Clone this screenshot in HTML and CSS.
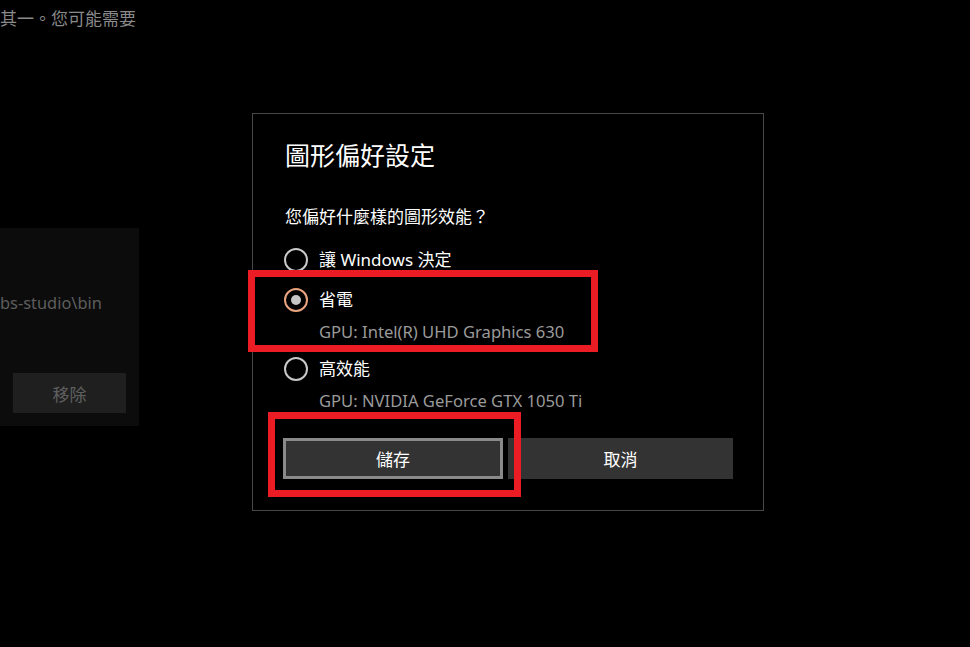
FILE: index.html
```html
<!DOCTYPE html>
<html lang="zh-Hant">
<head>
<meta charset="utf-8">
<title>圖形偏好設定</title>
<link rel="stylesheet" href="styles.css">
</head>
<body>
<div class="page">
  <p class="bg-text">其一。您可能需要</p>
  <div class="app-panel">
    <p class="app-path">bs-studio\bin</p>
    <button class="remove-btn" type="button">移除</button>
  </div>
</div>

<div class="dialog">
  <h1 class="dialog-title">圖形偏好設定</h1>
  <p class="question">您偏好什麼樣的圖形效能？</p>
  <div class="options">
    <div class="option opt-first">
      <div class="opt-row"><span class="radio"></span><span class="opt-label">讓 Windows 決定</span></div>
    </div>
    <div class="option opt-second">
      <div class="opt-row"><span class="radio radio-on"><span class="dot"></span></span><span class="opt-label">省電</span></div>
      <div class="gpu">GPU: Intel(R) UHD Graphics 630</div>
    </div>
    <div class="option opt-third">
      <div class="opt-row"><span class="radio"></span><span class="opt-label">高效能</span></div>
      <div class="gpu">GPU: NVIDIA GeForce GTX 1050 Ti</div>
    </div>
  </div>
  <div class="actions">
    <button class="btn btn-focus" type="button">儲存</button>
    <button class="btn" type="button">取消</button>
  </div>
</div>

<div class="mark mark-power"></div>
<div class="mark mark-save"></div>
</body>
</html>
```

FILE: styles.css
```css
* { box-sizing: border-box; }
html, body {
  margin: 0;
  padding: 0;
  background: #000;
  width: 970px;
  height: 647px;
  overflow: hidden;
  font-family: "Noto Sans", "Noto Sans CJK TC", sans-serif;
  font-size: 17px;
  color: #fff;
}
.page { position: relative; }
.bg-text {
  margin: 7px 0 0 0;
  line-height: 24px;
  color: #8a8a8a;
  white-space: nowrap;
}
.app-panel {
  margin-top: 197px;
  width: 139px;
  height: 198px;
  background: #0c0c0c;
  overflow: hidden;
  display: flex;
  flex-direction: column;
  align-items: flex-start;
}
.app-path {
  margin: 63px 0 0 0;
  line-height: 24px;
  font-size: 16.4px;
  color: #5e5e5e;
  white-space: nowrap;
}
.remove-btn {
  margin: 58px 0 0 13px;
  width: 113px;
  height: 40px;
  border: 0;
  background: #1f1f1f;
  color: #5e5e5e;
  font-family: inherit;
  font-size: 17px;
  padding: 0;
}

.dialog {
  position: absolute;
  left: 252px;
  top: 113px;
  width: 512px;
  height: 398px;
  border: 1px solid #474747;
  background: #000;
  padding: 25px 30px 0 32px;
}
.dialog-title {
  margin: 0;
  font-size: 25px;
  font-weight: 400;
  line-height: 32px;
}
.question {
  margin: 34px 0 0 0;
  line-height: 24px;
}
.options { margin-top: 19px; }
.opt-second { margin-top: 16px; }
.opt-third { margin-top: 13px; }
.opt-row {
  display: flex;
  align-items: center;
  height: 24px;
  margin-left: -1px;
}
.radio {
  width: 24px;
  height: 24px;
  border: 2px solid #c8c8c8;
  border-radius: 50%;
  display: flex;
  align-items: center;
  justify-content: center;
  flex: none;
}
.radio-on { border-color: #e9a37e; }
.dot {
  width: 10px;
  height: 10px;
  border-radius: 50%;
  background: #c6c6c6;
}
.opt-label {
  margin-left: 11px;
  line-height: 24px;
}
.gpu {
  margin: 8px 0 0 34px;
  line-height: 24px;
  color: #9a9a9a;
  font-size: 16.6px;
  white-space: nowrap;
}
.actions {
  margin: 25px 0 0 -2px;
  display: grid;
  grid-template-columns: 220px 225px;
  column-gap: 5px;
}
.btn {
  height: 41px;
  border: 0;
  background: #333;
  color: #fff;
  font-family: inherit;
  font-size: 17px;
  padding: 0;
}
.btn-focus { border: 3px solid #8a8a8a; }

.mark {
  position: absolute;
  border: 7px solid #ec1c24;
}
.mark-power { left: 248px; top: 270px; width: 350px; height: 82px; }
.mark-save { left: 268px; top: 412px; width: 253px; height: 85px; }
```
